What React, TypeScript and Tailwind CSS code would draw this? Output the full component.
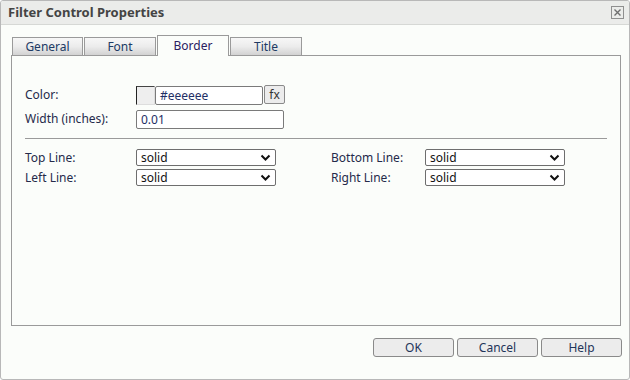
import React from 'react'

const tabs = ['General', 'Font', 'Border', 'Title']

function Chevron(): React.JSX.Element {
  return (
    <svg width="11" height="8" viewBox="0 0 11 8" className="absolute right-[4px] top-[4px]">
      <path d="M1.5 1.5 L5.5 5.5 L9.5 1.5" fill="none" stroke="#111" strokeWidth="2" />
    </svg>
  )
}

function Select({ value }: { value: string }): React.JSX.Element {
  return (
    <div className="relative w-[140px] h-[17px] border border-[#6e6e6e] rounded-[2px] bg-white text-[12px] leading-[15px] pl-[4px] text-[#111]">
      {value}
      <Chevron />
    </div>
  )
}

function Button({ label }: { label: string }): React.JSX.Element {
  return (
    <button className="w-[81px] h-[19px] border border-[#8a8a8a] rounded-[3px] bg-[#ececec] text-[12px] leading-[17px] text-[#1f3559]">
      {label}
    </button>
  )
}

export default function App(): React.JSX.Element {
  return (
    <div className="w-[630px] h-[380px] bg-white">
      <div
        className="w-[630px] h-[380px] border border-[#b8b8b8] rounded-[3px] bg-[#fbfdfa] flex flex-col overflow-hidden"
        style={{ fontFamily: '"Noto Sans", "Open Sans", sans-serif' }}
      >
        {/* Title bar */}
        <div className="h-[24px] shrink-0 bg-[#ebecea] border-b border-[#d6d8d5] flex items-center justify-between pl-[7px] pr-[5px]">
          <span className="text-[13px] font-bold text-[#444]">Filter Control Properties</span>
          <svg width="13" height="13" viewBox="0 0 13 13">
            <rect x="0.5" y="0.5" width="12" height="12" fill="none" stroke="#8f8f8f" />
            <path d="M3.5 3.5 L9.5 9.5 M9.5 3.5 L3.5 9.5" stroke="#6f6f6f" strokeWidth="1.4" />
          </svg>
        </div>

        {/* Tabs */}
        <div className="ml-[11px] mt-[10px] flex items-end gap-[1px] -mb-px relative z-10">
          {tabs.map((t, i) =>
            t === 'Border' ? (
              <div
                key={t}
                className="w-[72px] h-[21px] border border-b-0 border-[#9a9a9a] bg-[#fbfdfa] text-[12px] text-[#2a2060] flex items-center justify-center pb-[1px]"
              >
                {t}
              </div>
            ) : (
              <div
                key={t}
                className={`${i === 0 ? 'w-[71px]' : 'w-[72px]'} h-[19px] border border-[#9a9a9a] bg-gradient-to-b from-[#f7f7f7] via-[#ececec] to-[#d2d2d2] text-[12px] text-[#203a64] flex items-center justify-center`}
              >
                {t}
              </div>
            )
          )}
        </div>

        {/* Panel */}
        <div className="ml-[10px] w-[610px] h-[271px] border border-[#9a9a9a] pl-[13px] pt-[29px] text-[12px] text-[#252a4a]">
          <div className="flex items-center h-[20px]">
            <span className="w-[111px]">Color:</span>
            <div className="w-[19px] h-[19px] bg-[#eeeeee] border border-l-[#222] border-t-[#444] border-r-[#ddd] border-b-[#ddd] mt-[1px]" />
            <div className="w-[108px] h-[19px] border border-[#7a7a7a] rounded-[2px] bg-white pl-[4px] leading-[17px] text-[#1f2f66] mt-[1px]">
              #eeeeee
            </div>
            <div className="ml-[1px] w-[21px] h-[19px] border border-[#8a8a8a] rounded-[2px] bg-[#ececec] leading-[17px] text-center text-[#333] mb-[1px]">
              fx
            </div>
          </div>
          <div className="flex items-center mt-[4px] h-[20px]">
            <span className="w-[111px]">Width (inches):</span>
            <div className="w-[148px] h-[19px] border border-[#7a7a7a] rounded-[2px] bg-white pl-[4px] leading-[17px] text-[#1f2f66]">
              0.01
            </div>
          </div>
          <div className="mt-[9px] w-[582px] h-px bg-[#9a9a9a]" />
          <div className="mt-[10px] grid grid-cols-[306px_1fr] auto-rows-[17px] gap-y-[3px]">
            <div className="flex items-center h-[17px]">
              <span className="w-[111px] leading-[17px]">Top Line:</span>
              <Select value="solid" />
            </div>
            <div className="flex items-center h-[17px]">
              <span className="w-[94px] leading-[17px]">Bottom Line:</span>
              <Select value="solid" />
            </div>
            <div className="flex items-center h-[17px]">
              <span className="w-[111px] leading-[17px]">Left Line:</span>
              <Select value="solid" />
            </div>
            <div className="flex items-center h-[17px]">
              <span className="w-[94px] leading-[17px]">Right Line:</span>
              <Select value="solid" />
            </div>
          </div>
        </div>

        {/* Footer buttons */}
        <div className="mt-[12px] flex justify-end gap-[3px] pr-[7px]">
          <Button label="OK" />
          <Button label="Cancel" />
          <Button label="Help" />
        </div>
      </div>
    </div>
  )
}
